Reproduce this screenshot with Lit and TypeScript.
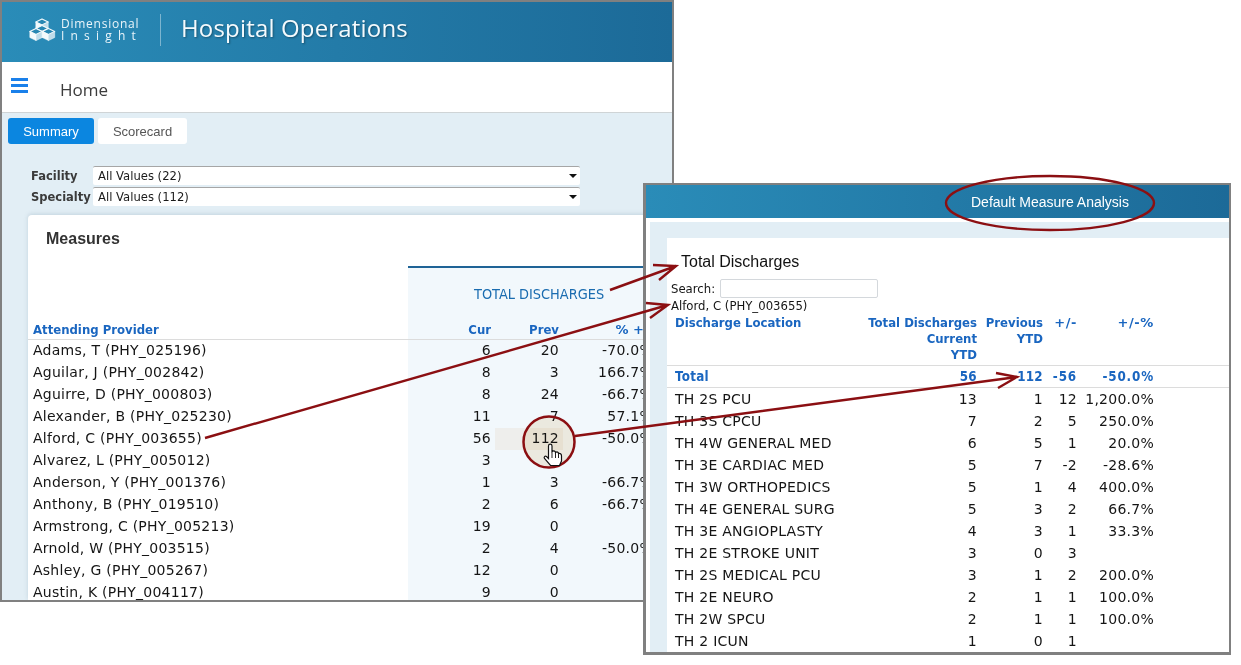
import { LitElement, html, css, svg } from "lit";
import { customElement } from "lit/decorators.js";

const LEFT: [string, string, string, string][] = [
  ["Adams, T (PHY_025196)", "6", "20", "-70.0%"],
  ["Aguilar, J (PHY_002842)", "8", "3", "166.7%"],
  ["Aguirre, D (PHY_000803)", "8", "24", "-66.7%"],
  ["Alexander, B (PHY_025230)", "11", "7", "57.1%"],
  ["Alford, C (PHY_003655)", "56", "112", "-50.0%"],
  ["Alvarez, L (PHY_005012)", "3", "", ""],
  ["Anderson, Y (PHY_001376)", "1", "3", "-66.7%"],
  ["Anthony, B (PHY_019510)", "2", "6", "-66.7%"],
  ["Armstrong, C (PHY_005213)", "19", "0", ""],
  ["Arnold, W (PHY_003515)", "2", "4", "-50.0%"],
  ["Ashley, G (PHY_005267)", "12", "0", ""],
  ["Austin, K (PHY_004117)", "9", "0", ""],
];

const RIGHT: string[][] = [
  ["TH 2S PCU", "13", "1", "12", "1,200.0%"],
  ["TH 3S CPCU", "7", "2", "5", "250.0%"],
  ["TH 4W GENERAL MED", "6", "5", "1", "20.0%"],
  ["TH 3E CARDIAC MED", "5", "7", "-2", "-28.6%"],
  ["TH 3W ORTHOPEDICS", "5", "1", "4", "400.0%"],
  ["TH 4E GENERAL SURG", "5", "3", "2", "66.7%"],
  ["TH 3E ANGIOPLASTY", "4", "3", "1", "33.3%"],
  ["TH 2E STROKE UNIT", "3", "0", "3", ""],
  ["TH 2S MEDICAL PCU", "3", "1", "2", "200.0%"],
  ["TH 2E NEURO", "2", "1", "1", "100.0%"],
  ["TH 2W SPCU", "2", "1", "1", "100.0%"],
  ["TH 2 ICUN", "1", "0", "1", ""],
];

function cube(cx: number, cy: number) {
  const w = 6.2, h = 3.1, d = 6;
  return svg`
    <polygon points="${cx},${cy - h} ${cx + w},${cy} ${cx},${cy + h} ${cx - w},${cy}" fill="#2887b3" stroke="#f4fafc" stroke-width="1.1" stroke-linejoin="round"/>
    <polygon points="${cx - w},${cy} ${cx},${cy + h} ${cx},${cy + h + d} ${cx - w},${cy + d}" fill="#f4fafc" stroke="#f4fafc" stroke-width=".5"/>
    <polygon points="${cx + w},${cy} ${cx},${cy + h} ${cx},${cy + h + d} ${cx + w},${cy + d}" fill="#bfdcea" stroke="#f4fafc" stroke-width=".5"/>`;
}

@customElement("app-root")
export class AppRoot extends LitElement {
  static styles = css`
    :host {
      display: block;
      position: relative;
      width: 1241px;
      height: 665px;
      overflow: hidden;
      background: #fff;
      font-family: "DejaVu Sans", sans-serif;
      color: #151515;
    }
    .win {
      position: absolute;
      box-sizing: border-box;
      overflow: hidden;
      border: solid #808080;
      background: #fff;
    }
    .left {
      left: 0;
      top: 0;
      width: 674px;
      height: 602px;
      border-width: 2px;
      display: flex;
      flex-direction: column;
    }
    .right {
      left: 643px;
      top: 183px;
      width: 588px;
      height: 472px;
      border-width: 2px 2px 3px 3px;
      display: flex;
      flex-direction: column;
    }
    .hdr {
      height: 60px;
      box-sizing: border-box;
      padding-bottom: 5px;
      flex: none;
      display: flex;
      align-items: center;
      background: linear-gradient(90deg, #2a8cb8, #1c6a98);
      color: #fff;
    }
    .logo {
      margin-left: 27px;
      width: 27px;
      height: 26px;
      flex: none;
    }
    .brand {
      margin-left: 5px;
      width: 84px;
      font: 12px/12px "Open Sans", sans-serif;
      letter-spacing: 0.75px;
      color: #eaf5fa;
    }
    .brand div:last-child {
      letter-spacing: 6.2px;
    }
    .sep {
      width: 1px;
      height: 32px;
      margin: 0 20px 0 15px;
      background: rgba(255, 255, 255, 0.4);
    }
    .title {
      font: 24px/30px "Open Sans", sans-serif;
      letter-spacing: 0.17px;
      color: #f4fafd;
      text-shadow: 1px 1px 2px rgba(0, 0, 0, 0.35);
      padding-bottom: 4px;
    }
    .nav {
      height: 51px;
      flex: none;
      box-sizing: border-box;
      border-bottom: 1px solid #cfd4d6;
      display: flex;
      align-items: center;
    }
    .burger {
      width: 17px;
      margin: 0 32px 0 9px;
      transform: translateY(-2px);
      display: flex;
      flex-direction: column;
      gap: 3px;
    }
    .burger i {
      display: block;
      height: 3px;
      background: #1a80ea;
    }
    .home {
      font: 17px "Open Sans", sans-serif;
      color: #3c3c3c;
      padding-top: 4px;
    }
    .body {
      flex: 1;
      min-height: 0;
      background: #e2eef5;
      display: flex;
      flex-direction: column;
    }
    .tabs {
      display: flex;
      gap: 4px;
      padding: 5px 0 0 6px;
      height: 26px;
    }
    .tab {
      display: flex;
      align-items: center;
      justify-content: center;
      border-radius: 3px;
      font: 13px "Liberation Sans", sans-serif;
      background: #fff;
      color: #555;
      width: 89px;
    }
    .tab.on {
      background: #0b86e0;
      color: #fff;
      width: 86px;
    }
    .filters {
      margin: 22px 0 0 29px;
      display: grid;
      grid-template-columns: 62px 487px;
      row-gap: 2px;
      grid-auto-rows: 19px;
      align-items: stretch;
    }
    .filters b {
      align-self: center;
      color: #3a3a3a;
      font-size: 11.5px;
    }
    .sel {
      box-sizing: border-box;
      border-top: 1px solid #a6a6a6;
      background: #fff;
      padding-left: 5px;
      display: flex;
      align-items: center;
      justify-content: space-between;
      border-radius: 2px;
      font-size: 11.6px;
      color: #1a1a1a;
    }
    .sel::after {
      content: "";
      margin-right: 3px;
      border: solid transparent;
      border-width: 4px 4px 0;
      border-top-color: #111;
    }
    .card {
      margin: 9px 0 0 26px;
      width: 660px;
      flex: 1;
      min-height: 0;
      background: #fff;
      border-radius: 4px 0 0 0;
      box-shadow: 0 -1px 4px rgba(120, 150, 170, 0.3);
      overflow: hidden;
    }
    .m-title {
      height: 51px;
      padding: 15px 0 0 18px;
      box-sizing: border-box;
      font: bold 16px "Liberation Sans", sans-serif;
      color: #333;
    }
    .m-head {
      margin-left: 380px;
      height: 52px;
      box-sizing: border-box;
      border-top: 2px solid #1f6396;
      background: #f2f8fc;
      padding: 18px 0 0 66px;
      color: #1a6cb0;
      font-family: "DejaVu Sans Condensed", "DejaVu Sans", sans-serif;
      font-stretch: condensed;
      font-size: 14.4px;
      line-height: 16px;
    }
    .lt {
      display: grid;
      grid-template-columns: 380px 87px 68px 125px;
      grid-auto-rows: 22px;
      font-size: 14px;
      letter-spacing: 0.25px;
      line-height: 20px;
      white-space: nowrap;
    }
    .lt > div {
      padding-right: 4px;
      text-align: right;
      background: #f2f8fc;
    }
    .lt > .n {
      text-align: left;
      padding-left: 5px;
      background: #fff;
    }
    .lt > .h {
      line-height: 24px;
      font-family: "DejaVu Sans Condensed", "DejaVu Sans", sans-serif;
      font-stretch: condensed;
      font-weight: bold;
      letter-spacing: 0;
      color: #1a66c0;
      font-size: 13px;
      box-shadow: inset 0 -1px 0 #dcdcdc;
    }
    .lt > .pct {
      padding-right: 35px;
    }
    .lt > .pct.h {
      padding-right: 34px;
      font-family: "DejaVu Sans", sans-serif;
      font-stretch: normal;
    }
    .lt > .hl {
      background: #eeeeec;
    }
    .r-hdr {
      height: 33px;
      flex: none;
      background: linear-gradient(90deg, #2a8cb8, #1c6a98);
      color: #fff;
      font: 14px/35px "Liberation Sans", sans-serif;
      padding-left: 325px;
    }
    .r-body {
      flex: 1;
      min-height: 0;
      margin: 4px 0 0 4px;
      padding: 16px 0 0 17px;
      background: #e2eef5;
      display: flex;
      flex-direction: column;
    }
    .r-card {
      flex: 1;
      min-height: 0;
      background: #fff;
      overflow: hidden;
      font-size: 11.7px;
    }
    .r-title {
      padding: 14px 0 0 14px;
      font: 16px/19px "Liberation Sans", sans-serif;
      color: #111;
    }
    .search {
      display: flex;
      align-items: center;
      gap: 5px;
      padding: 8px 0 0 4px;
      height: 19px;
      line-height: 19px;
    }
    .search span {
      padding-top: 2px;
    }
    .search i {
      display: block;
      box-sizing: border-box;
      width: 158px;
      height: 19px;
      border: 1px solid #d4d8dc;
      border-radius: 2px;
    }
    .who {
      padding-left: 4px;
      line-height: 16px;
    }
    .rt {
      display: grid;
      grid-template-columns: 200px 114px 62px 34px 77px;
      grid-template-rows: 52px;
      grid-auto-rows: 22px;
      width: 100%;
      font-size: 14px;
      letter-spacing: 0.25px;
      line-height: 22px;
      white-space: nowrap;
      position: relative;
    }
    .rt > div {
      text-align: right;
    }
    .rt > .n {
      text-align: left;
      padding-left: 8px;
    }
    .rt > .cur {
      padding-right: 4px;
    }
    .rt > .hc {
      box-sizing: border-box;
      padding-top: 1px;
      font-family: "DejaVu Sans Condensed", "DejaVu Sans", sans-serif;
      font-stretch: condensed;
      font-weight: bold;
      font-size: 13px;
      letter-spacing: 0;
      line-height: 16px;
      color: #1a66c0;
    }
    .rt > .hc.w {
      font-family: "DejaVu Sans", sans-serif;
      font-stretch: normal;
      letter-spacing: 0.6px;
    }
    .rt > .t {
      box-sizing: border-box;
      font-family: "DejaVu Sans Condensed", "DejaVu Sans", sans-serif;
      font-stretch: condensed;
      font-weight: bold;
      font-size: 13.3px;
      letter-spacing: 0.3px;
      color: #1a66c0;
    }
    .rt > .t.w {
      letter-spacing: 0.85px;
    }
    .rule {
      position: absolute;
      left: 0;
      width: 562px;
      height: 1px;
      background: #dcdcdc;
    }
    .rule.a {
      top: 51px;
    }
    .rule.b {
      top: 73px;
    }
    .spot {
      position: absolute;
      left: 523px;
      top: 416px;
      width: 52px;
      height: 52px;
      border-radius: 50%;
      background: #f8f0e2;
      mix-blend-mode: multiply;
    }
    .over {
      position: absolute;
      left: 0;
      top: 0;
      width: 1241px;
      height: 665px;
      pointer-events: none;
    }
  `;

  render() {
    const cubes = [
      [13, 5],
      [13, 11.5],
      [7, 14.5],
      [19.5, 14.5],
    ];
    return html`
      <div class="win left">
        <div class="hdr">
          <svg class="logo" viewBox="0 0 27 26">${cubes.map(([x, y]) => cube(x, y))}</svg>
          <div class="brand"><div>Dimensional</div><div>Insight</div></div>
          <div class="sep"></div>
          <div class="title">Hospital Operations</div>
        </div>
        <div class="nav">
          <div class="burger"><i></i><i></i><i></i></div>
          <div class="home">Home</div>
        </div>
        <div class="body">
          <div class="tabs">
            <div class="tab on">Summary</div>
            <div class="tab">Scorecard</div>
          </div>
          <div class="filters">
            <b>Facility</b><div class="sel">All Values (22)</div>
            <b>Specialty</b><div class="sel">All Values (112)</div>
          </div>
          <div class="card">
            <div class="m-title">Measures</div>
            <div class="m-head">TOTAL DISCHARGES</div>
            <div class="lt">
              <div class="n h">Attending Provider</div>
              <div class="h">Cur</div>
              <div class="h">Prev</div>
              <div class="h pct">% +/-</div>
              ${LEFT.map(
                (r) => html`
                  <div class="n">${r[0]}</div>
                  <div>${r[1]}</div>
                  <div class=${r[2] === "112" ? "hl" : ""}>${r[2]}</div>
                  <div class="pct">${r[3]}</div>
                `
              )}
            </div>
          </div>
        </div>
      </div>

      <div class="win right">
        <div class="r-hdr">Default Measure Analysis</div>
        <div class="r-body">
          <div class="r-card">
            <div class="r-title">Total Discharges</div>
            <div class="search"><span>Search:</span><i></i></div>
            <div class="who">Alford, C (PHY_003655)</div>
            <div class="rt">
              <i class="rule a"></i>
              <i class="rule b"></i>
              <div class="hc n">Discharge Location</div>
              <div class="hc cur">Total Discharges<br />Current<br />YTD</div>
              <div class="hc">Previous<br />YTD</div>
              <div class="hc w">+/-</div>
              <div class="hc w">+/-%</div>
              <div class="n t">Total</div>
              <div class="t cur">56</div>
              <div class="t">112</div>
              <div class="t w">-56</div>
              <div class="t w">-50.0%</div>
              ${RIGHT.map(
                (r) => html`
                  <div class="n">${r[0]}</div>
                  <div class="cur">${r[1]}</div>
                  <div>${r[2]}</div>
                  <div>${r[3]}</div>
                  <div>${r[4]}</div>
                `
              )}
            </div>
          </div>
        </div>
      </div>

      <div class="spot"></div>
      <svg class="over" viewBox="0 0 1241 665">
        <g fill="none" stroke="#8b0f12" stroke-width="2.4">
          <ellipse cx="1050" cy="203" rx="104" ry="27" />
          <path d="M610 290 L676 266 M653 265 L676 266 L659 280" />
          <path d="M205 438 L668 305 M646 303 L668 305 L650 318" />
          <path d="M575 436 L1017 377 M996 373 L1017 377 L998 388" />
        </g>
        <circle cx="549" cy="442" r="25.5" fill="none" stroke="#8b0f12" stroke-width="2.5" />
        <path
          d="M548.5 446 C548.5 443.500 552 443.500 552 446 L552 451.500 C554 450.500 555.500 451 555.500 452.500 C557 451.500 558.500 452 558.500 453.500 C560 453 561.500 454 561.500 456 L561.500 461 L559.500 465.500 L550.500 465.500 L544.500 458.500 C543.500 457 545 455.500 546.500 456.500 L548.500 458.500 Z"
          fill="#fff"
          stroke="#111"
          stroke-width="1.2"
        />
        <path d="M552 452 V458 M555.500 453 V458 M558.500 454 V458" stroke="#222" stroke-width="1" fill="none" />
      </svg>
    `;
  }
}
